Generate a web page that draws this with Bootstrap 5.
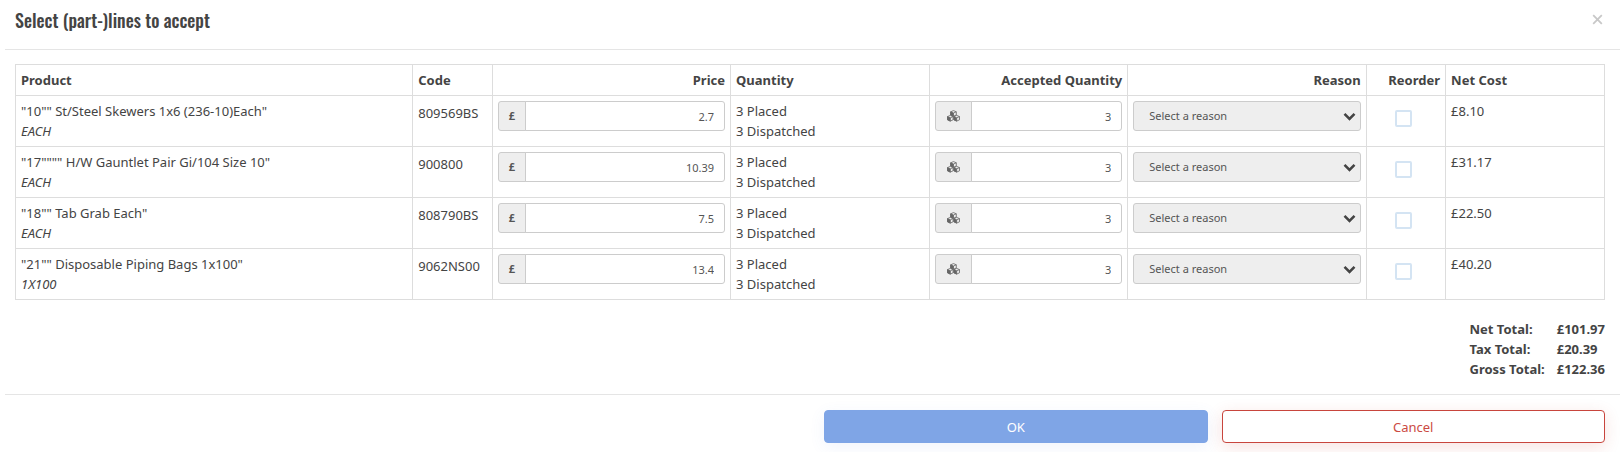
<!DOCTYPE html>
<html lang="en">
<head>
<meta charset="utf-8">
<meta name="viewport" content="width=device-width, initial-scale=1">
<title>Select (part-)lines to accept</title>
<link href="https://cdn.jsdelivr.net/npm/bootstrap@5.3.0/dist/css/bootstrap.min.css" rel="stylesheet">
<style>
  body { font-family: "Noto Sans", "Open Sans", sans-serif; font-size: 13px; line-height: 20px; color: #444; overflow-x: hidden; }
  .accept-dialog { padding-left: 5px; }
  .dialog-head { padding: 10px 16px 19px 10px; border-bottom: 1px solid #e5e5e5; }
  .dialog-title { font-family: "Oswald", "Roboto Condensed", "Roboto", sans-serif; font-size: 18px; line-height: 20px; font-weight: 500; margin: 0; }
  .close-x { width: 11px; height: 11px; margin-right: 1px; line-height: 0; color: #c8c8c8; }
  .dialog-main { padding: 14px 15px 15px 10px; }
  .lines { table-layout: fixed; color: #444; border-color: #ddd; margin-bottom: 19px; }
  .lines > :not(caption) > * > * { padding: 5px; color: #444; border-color: #ddd; }
  .lines thead th { font-weight: 700; border-bottom-width: 1px; }
  .lines tbody .code { padding-top: 7px; }
  .lines tbody .tick { padding-top: 14px; padding-right: 9px; line-height: 0; }
  .w-product { width: 25%; } .w-narrow { width: 5%; } .w-wide { width: 15%; } .w-mid { width: 12.5%; } .w-cost { width: 10%; }
  .lines .form-control, .lines .input-group-text, .lines .form-select { font-size: 11px; line-height: 18px; height: 30px; border-color: #ccc; border-radius: 3px; color: #555; }
  .lines .form-control { padding: 5px 10px; text-align: right; }
  .lines .input-group-text { background: #eee; padding: 5px 10px; font-weight: 700; justify-content: center; }
  .lines .form-select { background-color: #eee; padding: 5px 30px 5px 15px; background-position: right 4px center; background-size: 13px 13px;
    background-image: url("data:image/svg+xml,%3Csvg xmlns='http://www.w3.org/2000/svg' viewBox='0 0 13 13'%3E%3Cpath fill='none' stroke='%23444' stroke-width='2.6' d='M1.5 3.8l5 5 5-5'/%3E%3C/svg%3E"); }
  .lines .form-check-input { width: 17px; height: 17px; margin: 0; border: 2px solid #d4e4f3; border-radius: 2px; }
  .totals { width: auto; }
  .totals th, .totals td { padding: 0; font-weight: 700; text-align: left; }
  .totals td { padding-left: 12px; }
  .dialog-foot { border-top: 1px solid #e5e5e5; padding: 15px 15px 9px 10px; gap: 14px; }
  .dialog-foot .btn { width: calc(25% - 14px); height: 33px; padding: 5px; font-size: 13px; line-height: 20px; border-radius: 4px; }
  .btn-ok, .btn-ok:hover { background: #7fa5e6; color: #fff; border-color: #7fa5e6; box-shadow: 0 4px 16px rgba(80,120,220,.08); }
  .btn-no { background: #fff; color: #cb4a43; border-color: #c8453d; box-shadow: 0 4px 16px rgba(200,60,50,.15); }
</style>
</head>
<body>
<svg class="d-none" aria-hidden="true">
  <symbol id="cubes" viewBox="0 0 14 12">
    <g stroke="#666" stroke-width="0.8" stroke-linejoin="round">
      <path fill="#eee" d="M4.2 1.8L7 .6l2.800 1.200v3.200L7 6.200 4.200 5zM1 6.600l2.800-1.200 2.800 1.200v3.200l-2.800 1.300L1 9.800zM7.400 6.600l2.800-1.200L13 6.600v3.200l-2.800 1.300-2.800-1.300z"/>
      <path fill="#666" d="M4.200 1.800L7 3v3.200L4.200 5zM1 6.600l2.800 1.200v3.300L1 9.800zM7.400 6.600l2.800 1.200v3.300L7.400 9.800z"/>
      <path fill="none" d="M7 3l2.800-1.200M3.800 7.800l2.800-1.200M10.200 7.800L13 6.600"/>
    </g>
  </symbol>
</svg>
<main class="accept-dialog">
  <header class="dialog-head d-flex justify-content-between align-items-start">
    <h1 class="dialog-title">Select (part-)lines to accept</h1>
    <button type="button" class="close-x border-0 bg-transparent p-0 mt-1" aria-label="Close"><svg width="11" height="11" viewBox="0 0 11 11"><path d="M1.200 1.200l8.600 8.600M9.800 1.200L1.200 9.800" stroke="currentColor" stroke-width="1.800"/></svg></button>
  </header>
  <section class="dialog-main">
    <table class="table table-bordered lines align-top">
      <thead><tr>
        <th scope="col" class="w-product">Product</th>
        <th scope="col" class="w-narrow">Code</th>
        <th scope="col" class="w-wide text-end">Price</th>
        <th scope="col" class="w-mid">Quantity</th>
        <th scope="col" class="w-mid text-end">Accepted Quantity</th>
        <th scope="col" class="w-wide text-end">Reason</th>
        <th scope="col" class="w-narrow text-end">Reorder</th>
        <th scope="col" class="w-cost">Net Cost</th>
      </tr></thead>
      <tbody>
        <tr>
          <td>"10"" St/Steel Skewers 1x6 (236-10)Each"<br><em>EACH</em></td>
          <td class="code">809569BS</td>
          <td><div class="input-group flex-nowrap"><label class="input-group-text" for="price1">£</label><input id="price1" class="form-control" type="text" value="2.7"></div></td>
          <td>3 Placed<br>3 Dispatched</td>
          <td><div class="input-group flex-nowrap"><label class="input-group-text" for="qty1" aria-label="Accepted quantity"><svg width="15" height="12"><use href="#cubes"/></svg></label><input id="qty1" class="form-control" type="text" value="3"></div></td>
          <td><select class="form-select" aria-label="Reason"><option>Select a reason</option></select></td>
          <td class="tick text-center"><input class="form-check-input" type="checkbox" aria-label="Reorder"></td>
          <td>£8.10</td>
        </tr>
        <tr>
          <td>"17"""" H/W Gauntlet Pair Gi/104 Size 10"<br><em>EACH</em></td>
          <td class="code">900800</td>
          <td><div class="input-group flex-nowrap"><label class="input-group-text" for="price2">£</label><input id="price2" class="form-control" type="text" value="10.39"></div></td>
          <td>3 Placed<br>3 Dispatched</td>
          <td><div class="input-group flex-nowrap"><label class="input-group-text" for="qty2" aria-label="Accepted quantity"><svg width="15" height="12"><use href="#cubes"/></svg></label><input id="qty2" class="form-control" type="text" value="3"></div></td>
          <td><select class="form-select" aria-label="Reason"><option>Select a reason</option></select></td>
          <td class="tick text-center"><input class="form-check-input" type="checkbox" aria-label="Reorder"></td>
          <td>£31.17</td>
        </tr>
        <tr>
          <td>"18"" Tab Grab Each"<br><em>EACH</em></td>
          <td class="code">808790BS</td>
          <td><div class="input-group flex-nowrap"><label class="input-group-text" for="price3">£</label><input id="price3" class="form-control" type="text" value="7.5"></div></td>
          <td>3 Placed<br>3 Dispatched</td>
          <td><div class="input-group flex-nowrap"><label class="input-group-text" for="qty3" aria-label="Accepted quantity"><svg width="15" height="12"><use href="#cubes"/></svg></label><input id="qty3" class="form-control" type="text" value="3"></div></td>
          <td><select class="form-select" aria-label="Reason"><option>Select a reason</option></select></td>
          <td class="tick text-center"><input class="form-check-input" type="checkbox" aria-label="Reorder"></td>
          <td>£22.50</td>
        </tr>
        <tr>
          <td>"21"" Disposable Piping Bags 1x100"<br><em>1X100</em></td>
          <td class="code">9062NS00</td>
          <td><div class="input-group flex-nowrap"><label class="input-group-text" for="price4">£</label><input id="price4" class="form-control" type="text" value="13.4"></div></td>
          <td>3 Placed<br>3 Dispatched</td>
          <td><div class="input-group flex-nowrap"><label class="input-group-text" for="qty4" aria-label="Accepted quantity"><svg width="15" height="12"><use href="#cubes"/></svg></label><input id="qty4" class="form-control" type="text" value="3"></div></td>
          <td><select class="form-select" aria-label="Reason"><option>Select a reason</option></select></td>
          <td class="tick text-center"><input class="form-check-input" type="checkbox" aria-label="Reorder"></td>
          <td>£40.20</td>
        </tr>
      </tbody>
    </table>
    <table class="totals ms-auto">
      <tbody>
        <tr><th scope="row">Net Total:</th><td>£101.97</td></tr>
        <tr><th scope="row">Tax Total:</th><td>£20.39</td></tr>
        <tr><th scope="row">Gross Total:</th><td>£122.36</td></tr>
      </tbody>
    </table>
  </section>
  <footer class="dialog-foot d-flex justify-content-end">
    <button type="button" class="btn btn-ok">OK</button>
    <button type="button" class="btn btn-no">Cancel</button>
  </footer>
</main>
<script src="https://cdn.jsdelivr.net/npm/bootstrap@5.3.0/dist/js/bootstrap.bundle.min.js"></script>
</body>
</html>
